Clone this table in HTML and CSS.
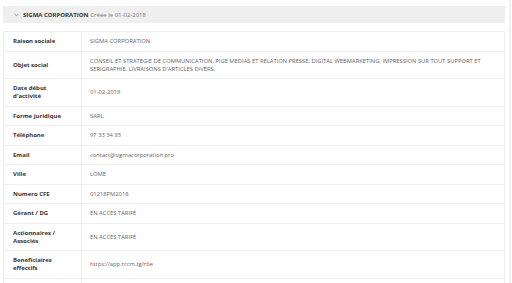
FILE: index.html
```html
<!DOCTYPE html>
<html lang="fr">
<head>
<meta charset="utf-8">
<link rel="stylesheet" href="styles.css">
</head>
<body>
<div class="panel">
  <div class="panel-head">
    <svg class="chev" width="5" height="4" viewBox="0 0 5 4"><path d="M0.6 1 L2.5 2.9 L4.4 1" fill="none" stroke="#777" stroke-width="0.8"/></svg>
    <span class="title">SIGMA CORPORATION</span>
    <span class="sub">Créée le 01-02-2018</span>
  </div>
  <table class="info">
    <tr><th>Raison sociale</th><td>SIGMA CORPORATION</td></tr>
    <tr><th>Objet social</th><td>CONSEIL ET STRATEGIE DE COMMUNICATION, PIGE MEDIAS ET RELATION PRESSE, DIGITAL WEBMARKETING, IMPRESSION SUR TOUT SUPPORT ET SERIGRAPHIE, LIVRAISONS D'ARTICLES DIVERS.</td></tr>
    <tr><th>Date début d'activité</th><td>01-02-2018</td></tr>
    <tr><th>Forme juridique</th><td>SARL</td></tr>
    <tr><th>Téléphone</th><td>97 33 34 85</td></tr>
    <tr><th>Email</th><td>contact@sigmacorporation.pro</td></tr>
    <tr><th>Ville</th><td>LOME</td></tr>
    <tr><th>Numero CFE</th><td>01218PM2018</td></tr>
    <tr><th>Gérant / DG</th><td>EN ACCES TARIFE</td></tr>
    <tr><th>Actionnaires / Associés</th><td>EN ACCES TARIFE</td></tr>
    <tr><th>Beneficiaires effectifs</th><td>https://app.rccm.tg/rbe</td></tr>
    <tr><th>&nbsp;</th><td>&nbsp;</td></tr>
  </table>
</div>
</body>
</html>
```

FILE: styles.css
```css
html, body {
  margin: 0;
  padding: 0;
  background: #fff;
}
body {
  font-family: "Open Sans", "Liberation Sans", sans-serif;
  font-size: 6px;
  color: #555;
  overflow: hidden;
  height: 283px;
}
.panel {
  padding: 6px 4px 0 3px;
  border-right: 2px solid #f2f2f2;
  margin-right: 1px;
}
.panel-head {
  background: #efefef;
  height: 17px;
  display: flex;
  align-items: center;
  padding-left: 11px;
  gap: 2px;
}
.chev {
  margin-right: 2px;
}
.title {
  font-weight: 700;
  color: #333;
}
.sub {
  color: #777;
}
.info {
  width: 100%;
  margin-top: 8px;
  border-collapse: collapse;
  border: 1px solid #eee;
}
.info th, .info td {
  border-top: 1px solid #eee;
  border-bottom: 1px solid #eee;
  text-align: left;
  vertical-align: middle;
  padding: 5.25px 8px;
  line-height: 8px;
}
.info th {
  width: 60px;
  font-weight: 700;
  color: #333;
  border-right: 1px solid #eee;
  padding-left: 9px;
}
.info td {
  color: #666;
  font-weight: 400;
  font-size: 5.8px;
  padding-right: 4px;
}
```
